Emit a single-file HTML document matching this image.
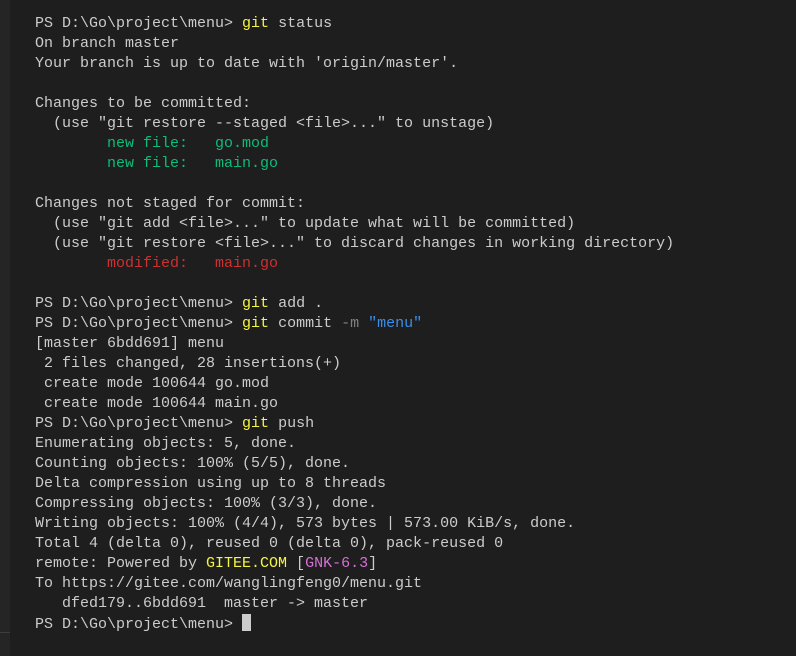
<!DOCTYPE html>
<html><head><style>
html,body{margin:0;padding:0;width:796px;height:656px;background:#1e1e1e;overflow:hidden}
.side{position:absolute;left:0;top:0;width:10px;height:656px;background:#252526}
.side2{position:absolute;left:0;top:632px;width:10px;height:1px;background:#3c3c3c}
pre{position:absolute;left:35px;top:14px;margin:0;font-family:"Liberation Mono",monospace;font-size:15px;line-height:20px;color:#cccccc;white-space:pre}
.y{color:#f5f543}.g{color:#0dbc79}.r{color:#cd3131}.d{color:#808080}.b{color:#3b8eea}.m{color:#d670d6}
.c{display:inline-block;width:9px;height:17px;background:#cccccc;vertical-align:-3px}
</style></head><body>
<div class="side"></div><div class="side2"></div>
<pre>PS D:\Go\project\menu&gt; <span class="y">git</span> status
On branch master
Your branch is up to date with 'origin/master'.

Changes to be committed:
  (use "git restore --staged &lt;file&gt;..." to unstage)
<span class="g">        new file:   go.mod</span>
<span class="g">        new file:   main.go</span>

Changes not staged for commit:
  (use "git add &lt;file&gt;..." to update what will be committed)
  (use "git restore &lt;file&gt;..." to discard changes in working directory)
<span class="r">        modified:   main.go</span>

PS D:\Go\project\menu&gt; <span class="y">git</span> add .
PS D:\Go\project\menu&gt; <span class="y">git</span> commit <span class="d">-m</span> <span class="b">"menu"</span>
[master 6bdd691] menu
 2 files changed, 28 insertions(+)
 create mode 100644 go.mod
 create mode 100644 main.go
PS D:\Go\project\menu&gt; <span class="y">git</span> push
Enumerating objects: 5, done.
Counting objects: 100% (5/5), done.
Delta compression using up to 8 threads
Compressing objects: 100% (3/3), done.
Writing objects: 100% (4/4), 573 bytes | 573.00 KiB/s, done.
Total 4 (delta 0), reused 0 (delta 0), pack-reused 0
remote: Powered by <span class="y">GITEE.COM</span> [<span class="m">GNK-6.3</span>]
To https://gitee.com/wanglingfeng0/menu.git
   dfed179..6bdd691  master -&gt; master
PS D:\Go\project\menu&gt; <span class="c"></span></pre>
</body></html>
